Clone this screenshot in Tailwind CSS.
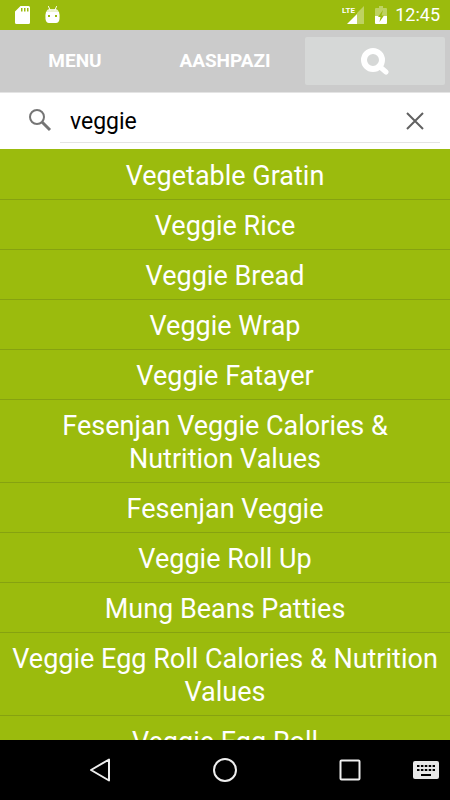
<!DOCTYPE html>
<html lang="en">
<head>
  <meta charset="UTF-8" />
  <meta name="viewport" content="width=device-width, initial-scale=1" />
  <title>Aashpazi</title>
  <script src="https://cdn.jsdelivr.net/npm/@tailwindcss/browser@4"></script>
</head>

<body class="bg-white font-[Roboto,sans-serif] h-screen flex flex-col overflow-hidden">

  <!-- Status bar -->
  <div class="bg-[#9bbb0d] text-white h-[30px] shrink-0 flex items-center justify-between pl-[15px] pr-[10px]">
    <div class="flex items-center gap-[15px]">
      <svg class="w-[15px] h-[18px]" viewBox="0 0 15 18" fill="#fff">
        <path fill-rule="evenodd" d="M5.500 0H13.500Q15 0 15 1.500V16.500Q15 18 13.500 18H1.500Q0 18 0 16.500V5.500ZM6 2V5.500H7.500V2ZM9 2V5.500H10.500V2ZM12 2V5.500H13.500V2Z" />
      </svg>
      <svg class="w-[15px] h-[18px]" viewBox="0 0 15 18">
        <path d="M3.500 .5L5 4M11.500 .5L10 4" stroke="#fff" stroke-width="1" stroke-linecap="round" />
        <path d="M1 7Q1.500 3 5 3H10Q13.500 3 14 7Z" fill="#fff" fill-opacity="0.8" />
        <path fill="#fff" fill-rule="evenodd" d="M1 6H14Q15 9 14.500 13Q14 17 11 17H4Q1 17 .5 13Q0 9 1 6ZM3 9V11H5V9ZM10 9V11H12V9Z" />
      </svg>
    </div>
    <div class="flex items-center">
      <svg class="w-[23px] h-[18px]" viewBox="0 0 23 18">
        <path d="M22 0V18H15V7Z" fill="#fff" fill-opacity="0.35" />
        <path d="M15 8V18H5Z" fill="#fff" />
        <text x="0" y="7" font-size="8" font-weight="700" fill="#fff">LTE</text>
      </svg>
      <svg class="w-[12px] h-[18px] ml-[10px]" viewBox="0 0 12 18">
        <path d="M4 0H8V2H11Q12 2 12 3V10H0V3Q0 2 1 2H4Z" fill="#fff" fill-opacity="0.35" />
        <path d="M0 10H12V17Q12 18 11 18H1Q0 18 0 17Z" fill="#fff" />
        <path d="M8 4L3 11H5.500L4.500 16L9 9.500H6.500Z" fill="#9bbb0d" />
      </svg>
      <span class="text-[18px] leading-[30px] ml-2">12:45</span>
    </div>
  </div>

  <!-- Tabs -->
  <nav class="bg-[#cbcbcb] h-[63px] shrink-0 grid grid-cols-3 text-white text-[19px] font-bold border-b border-[#e4e4e4]">
    <button type="button">MENU</button>
    <button type="button">AASHPAZI</button>
    <button type="button" aria-label="Search" class="bg-[#d6d8d7] rounded-xs mx-[5px] my-[7px] flex items-center justify-center">
      <svg class="w-7 h-7" viewBox="0 0 28 28" fill="none" stroke="#fff">
        <circle cx="12" cy="13" r="9" stroke-width="6" />
        <path d="M18 19L25 25" stroke-width="5" stroke-linecap="round" />
      </svg>
    </button>
  </nav>

  <!-- Search box -->
  <form class="bg-white h-14 shrink-0 flex pl-[28px] pr-[10px]">
    <label for="search" class="w-8 pt-4" aria-label="Search recipes">
      <svg class="w-6 h-6" viewBox="0 0 24 24" fill="none" stroke="#757575">
        <circle cx="9" cy="8" r="7" stroke-width="2" />
        <path d="M14 13L22 21" stroke-width="3" />
      </svg>
    </label>
    <div class="flex-1 min-w-0 h-[50px] flex items-center border-b border-[#e4e4e4] pl-[10px] pr-4 pt-[6px]">
      <input id="search" type="text" value="veggie" class="flex-1 min-w-0 text-[23px] leading-8 pt-[2px] text-black outline-none" />
      <button type="button" aria-label="Clear">
        <svg class="w-[18px] h-[18px]" viewBox="0 0 18 18" stroke="#616161" stroke-width="2">
          <path d="M1 1L17 17M17 1L1 17" />
        </svg>
      </button>
    </div>
  </form>

  <!-- Results -->
  <ul class="flex-1 min-h-0 overflow-y-auto [scrollbar-width:none] bg-[#9bbb0d] text-white text-center text-[27px] leading-[33px] pt-px">
    <li class="border-b border-[#86a210] pt-[10px] pb-[6px]"><a href="#">Vegetable Gratin</a></li>
    <li class="border-b border-[#86a210] pt-[10px] pb-[6px]"><a href="#">Veggie Rice</a></li>
    <li class="border-b border-[#86a210] pt-[10px] pb-[6px]"><a href="#">Veggie Bread</a></li>
    <li class="border-b border-[#86a210] pt-[10px] pb-[6px]"><a href="#">Veggie Wrap</a></li>
    <li class="border-b border-[#86a210] pt-[10px] pb-[6px]"><a href="#">Veggie Fatayer</a></li>
    <li class="border-b border-[#86a210] pt-[10px] pb-[6px]"><a href="#">Fesenjan Veggie Calories &amp;<br />Nutrition Values</a></li>
    <li class="border-b border-[#86a210] pt-[10px] pb-[6px]"><a href="#">Fesenjan Veggie</a></li>
    <li class="border-b border-[#86a210] pt-[10px] pb-[6px]"><a href="#">Veggie Roll Up</a></li>
    <li class="border-b border-[#86a210] pt-[10px] pb-[6px]"><a href="#">Mung Beans Patties</a></li>
    <li class="border-b border-[#86a210] pt-[10px] pb-[6px]"><a href="#">Veggie Egg Roll Calories &amp; Nutrition Values</a></li>
    <li class="border-b border-[#86a210] pt-[10px] pb-[6px]"><a href="#">Veggie Egg Roll</a></li>
  </ul>

  <!-- Navigation bar -->
  <footer class="bg-black h-[60px] shrink-0 grid grid-cols-[1fr_125px_125px_125px_1fr] items-center justify-items-center">
    <button type="button" aria-label="Back" class="col-start-2">
      <svg class="w-6 h-6" viewBox="0 0 24 24" fill="none" stroke="#eee" stroke-width="2" stroke-linejoin="round">
        <path d="M21 1.500V22.500L3 12Z" />
      </svg>
    </button>
    <button type="button" aria-label="Home">
      <svg class="w-6 h-6" viewBox="0 0 24 24" fill="none" stroke="#eee" stroke-width="2">
        <circle cx="12" cy="12" r="11" />
      </svg>
    </button>
    <button type="button" aria-label="Recent apps">
      <svg class="w-6 h-6" viewBox="0 0 24 24" fill="none" stroke="#eee" stroke-width="2">
        <rect x="2.500" y="2.500" width="19" height="19" rx="1" />
      </svg>
    </button>
    <button type="button" aria-label="Keyboard" class="justify-self-start">
      <svg class="w-[26px] h-[18px]" viewBox="0 0 26 18">
        <rect width="26" height="18" rx="2" fill="#e8e8e8" />
        <path d="M4 5H22M4 9H22" stroke="#000" stroke-width="2" stroke-dasharray="2.500 1.400" />
        <path d="M8 14H18" stroke="#000" stroke-width="2" />
      </svg>
    </button>
  </footer>

</body>
</html>
